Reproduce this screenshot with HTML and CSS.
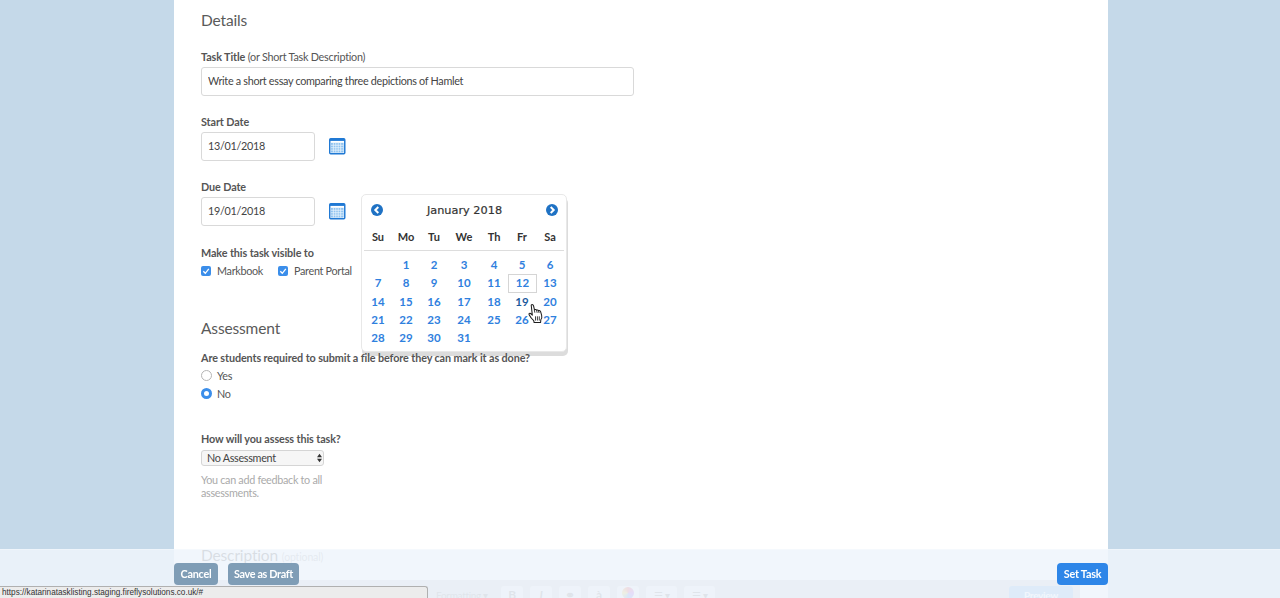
FILE: index.html
```html
<!DOCTYPE html>
<html lang="en">
<head>
<meta charset="utf-8">
<title>Set Task</title>
<link rel="stylesheet" href="styles.css">
</head>
<body>
<main class="panel">
  <h2 class="heading details-heading">Details</h2>

  <div class="field title-field">
    <label class="label">Task Title <span class="label-note">(or Short Task Description)</span></label>
    <input class="input input-wide" type="text" value="Write a short essay comparing three depictions of Hamlet">
  </div>

  <div class="field date-field">
    <label class="label">Start Date</label>
    <div class="date-row">
      <input class="input input-date" type="text" value="13/01/2018">
      <svg class="cal-icon" viewBox="0 0 17 17"><rect x="0.75" y="0.75" width="15.5" height="15.5" rx="1" fill="#fff" stroke="#2079d4" stroke-width="1.5"/><rect x="1" y="1" width="15" height="2" fill="#2079d4"/><rect x="2" y="5" width="13" height="10" fill="#8fc3f0"/><path d="M4.500 5v10M7 5v10M9.500 5v10M12 5v10M2 7.500h13M2 10h13M2 12.500h13" stroke="#e6f2fc" stroke-width=".8"/></svg>
    </div>
  </div>

  <div class="field date-field">
    <label class="label">Due Date</label>
    <div class="date-row">
      <input class="input input-date" type="text" value="19/01/2018">
      <svg class="cal-icon" viewBox="0 0 17 17"><rect x="0.75" y="0.75" width="15.5" height="15.5" rx="1" fill="#fff" stroke="#2079d4" stroke-width="1.5"/><rect x="1" y="1" width="15" height="2" fill="#2079d4"/><rect x="2" y="5" width="13" height="10" fill="#8fc3f0"/><path d="M4.500 5v10M7 5v10M9.500 5v10M12 5v10M2 7.500h13M2 10h13M2 12.500h13" stroke="#e6f2fc" stroke-width=".8"/></svg>
    </div>
    <div class="calendar">
      <div class="cal-head">
        <svg class="cal-nav" viewBox="0 0 12 12"><circle cx="6" cy="6" r="6" fill="#1f72c4"/><path d="M7.300 3 4.300 6l3 3" fill="none" stroke="#fff" stroke-width="2"/></svg>
        <span class="cal-title">January 2018</span>
        <svg class="cal-nav" viewBox="0 0 12 12"><circle cx="6" cy="6" r="6" fill="#1f72c4"/><path d="M4.700 3l3 3-3 3" fill="none" stroke="#fff" stroke-width="2"/></svg>
      </div>
      <div class="cal-grid cal-weekdays">
        <span>Su</span><span>Mo</span><span>Tu</span><span>We</span><span>Th</span><span>Fr</span><span>Sa</span>
      </div>
      <div class="cal-grid cal-days">
        <span></span><span>1</span><span>2</span><span>3</span><span>4</span><span>5</span><span>6</span>
        <span>7</span><span>8</span><span>9</span><span>10</span><span>11</span><span class="today">12</span><span>13</span>
        <span>14</span><span>15</span><span>16</span><span>17</span><span>18</span><span class="hover">19</span><span>20</span>
        <span>21</span><span>22</span><span>23</span><span>24</span><span>25</span><span>26</span><span>27</span>
        <span>28</span><span>29</span><span>30</span><span>31</span>
      </div>
      <svg class="cursor" viewBox="0 0 17 21"><path d="M3.400 1.500c.9-.9 2.200-.4 2.500.8l1 4.300c.7-.7 1.800-.5 2.200.4.800-.6 1.800-.3 2.100.6.800-.4 1.900-.1 2.200.9l1.100 3.900c.5 1.900.1 3.500-.9 4.700l-.2 3H6.500l-.4-2C4.200 16.400 2.400 14.100 1.200 11.800c-.6-1.100.7-2.100 1.600-1.300l1.800 1.700z" fill="#fff" stroke="#1c1c1c" stroke-width="1.100" stroke-linejoin="round"/><path d="M8 13.500V18M10 13.500V18M12 13.500V18M6.700 6.700l.6 3M9.100 7l.6 2.800M11.200 7.600l.6 2.400" fill="none" stroke="#1c1c1c" stroke-width=".9"/></svg>
    </div>
  </div>

  <div class="field visible-field">
    <label class="label">Make this task visible to</label>
    <div class="check-row">
      <span class="option"><svg class="check" viewBox="0 0 10 10"><rect width="10" height="10" rx="2" fill="#3b8eea"/><path d="M2.300 5.200 4.300 7.300 7.800 2.800" fill="none" stroke="#fff" stroke-width="1.300"/></svg>Markbook</span>
      <span class="option"><svg class="check" viewBox="0 0 10 10"><rect width="10" height="10" rx="2" fill="#3b8eea"/><path d="M2.300 5.200 4.300 7.300 7.800 2.800" fill="none" stroke="#fff" stroke-width="1.300"/></svg>Parent Portal</span>
    </div>
  </div>

  <h2 class="heading assessment-heading">Assessment</h2>

  <div class="field submit-field">
    <label class="label">Are students required to submit a file before they can mark it as done?</label>
    <div class="radio-row"><span class="radio"></span>Yes</div>
    <div class="radio-row"><span class="radio radio-on"></span>No</div>
  </div>

  <div class="field assess-field">
    <label class="label">How will you assess this task?</label>
    <div class="select">No Assessment
      <svg class="select-arrows" viewBox="0 0 6 10"><path d="M3 0 6 4H0zM3 10 0 6h6z" fill="#333"/></svg>
    </div>
    <p class="help">You can add feedback to all assessments.</p>
  </div>

  <h2 class="heading description-heading">Description <span class="optional">(optional)</span></h2>

  <div class="toolbar">
    <span class="tool tool-format">Formatting ▾</span>
    <span class="tool tool-b">B</span>
    <span class="tool tool-b tool-i">I</span>
    <span class="tool tool-b">⚭</span>
    <span class="tool tool-b">à</span>
    <span class="tool tool-b"><span class="swatch"></span></span>
    <span class="tool tool-list">☰ ▾</span>
    <span class="tool tool-list">☰ ▾</span>
    <span class="tool tool-preview">Preview</span>
  </div>
</main>

<footer class="action-bar">
  <div class="action-inner">
    <button class="btn btn-muted btn-cancel">Cancel</button>
    <button class="btn btn-muted btn-draft">Save as Draft</button>
    <button class="btn btn-primary">Set Task</button>
  </div>
</footer>

<div class="status-bar">https://katarinatasklisting.staging.fireflysolutions.co.uk/#</div>
</body>
</html>
```
FILE: styles.css
```css
* { box-sizing: border-box; }
html, body { height: 598px; overflow: hidden; }
body {
  margin: 0;
  background: #c5d9e9;
  font-family: "Lato", "Noto Sans", sans-serif;
  font-size: 10.8px;
  letter-spacing: -0.3px;
  color: #555;
}
.panel {
  position: relative;
  width: 934px;
  height: 598px;
  margin-left: 174px;
  padding: 10px 0 0 27px;
  background: #fff;
  overflow: hidden;
}
.heading {
  margin: 0;
  font-size: 15.5px;
  line-height: 20px;
  font-weight: 400;
  letter-spacing: -0.15px;
  color: #5a5a5a;
}
.label {
  display: block;
  font-weight: 700;
  font-size: 10.8px;
  line-height: 14px;
  letter-spacing: -0.1px;
  color: #555;
}
.label-note { font-weight: 400; letter-spacing: -0.25px; }
.field { position: relative; }
.title-field { margin-top: 20px; }
.input {
  display: block;
  height: 29px;
  padding: 0 6px 2px;
  border: 1px solid #d9d9d9;
  border-radius: 3px;
  background: #fff;
  font-family: inherit;
  font-size: 10.8px;
  letter-spacing: -0.3px;
  color: #444;
  outline: none;
}
.input-wide { width: 433px; margin-top: 3px; }
.date-field { margin-top: 19px; }
.date-row { display: flex; align-items: center; gap: 14px; margin-top: 3px; }
.input-date { width: 114px; }
.cal-icon { width: 16.5px; height: 16.5px; }

.calendar {
  position: absolute;
  left: 160px;
  top: 14px;
  width: 206px;
  height: 158px;
  padding: 7px 2px 0;
  background: #fff;
  border: 1px solid #e8e8e8;
  border-radius: 5px;
  box-shadow: 1px 4px 0 #dcdcdc;
  z-index: 2;
  letter-spacing: 0;
}
.cal-head {
  display: flex;
  align-items: center;
  justify-content: space-between;
  padding: 0 6px 0 7px;
  height: 16px;
}
.cal-nav { width: 12px; height: 12px; }
.cal-title {
  font-family: "DejaVu Sans", sans-serif;
  font-size: 11.3px;
  -webkit-text-stroke: 0.2px #333;
  color: #333;
}
.cal-grid {
  display: grid;
  grid-template-columns: 28px 28px 28px 32px 28px 28px 28px;
  text-align: center;
}
.cal-weekdays {
  margin-top: 10px;
  height: 23px;
  padding: 2px 0 7px;
  line-height: 13px;
  border-bottom: 1px solid #ddd;
  color: #333;
  font-weight: 700;
  font-size: 11px;
}
.cal-days {
  margin-top: 5px;
  grid-auto-rows: 18.25px;
  line-height: 18.25px;
  font-weight: 700;
  font-size: 11.5px;
  color: #2f80de;
}
.today {
  border: 1px solid #d5d5d5;
  line-height: 16.25px;
  width: 29px;
}
.hover { color: #1d5a9e; }
.cursor {
  position: absolute;
  left: 166px;
  top: 108px;
  width: 16px;
  height: 21px;
}

.visible-field { margin-top: 20px; }
.check-row { display: flex; gap: 15px; margin-top: 2px; }
.option { display: inline-flex; align-items: center; gap: 6px; line-height: 18px; }
.check { width: 10px; height: 10px; }

.assessment-heading { margin-top: 38px; }
.submit-field { margin-top: 13px; }
.radio-row { display: flex; align-items: center; gap: 6px; line-height: 17.5px; height: 17.5px; }
.submit-field .label { position: relative; z-index: 3; margin-bottom: 2px; }
.radio {
  width: 11px;
  height: 11px;
  margin-left: -0.5px;
  margin-right: -0.5px;
  border-radius: 50%;
  border: 1px solid #b5b5b5;
  background: #fff;
}
.radio-on { border: 3.500px solid #3b8eea; }

.assess-field { margin-top: 30px; }
.select {
  position: relative;
  width: 123px;
  height: 16px;
  margin-top: 4px;
  padding-left: 5px;
  line-height: 14px;
  border: 1px solid #d5d5d5;
  border-radius: 3px;
  background: #f6f6f6;
  color: #444;
}
.select-arrows {
  position: absolute;
  right: 1px;
  top: 2px;
  width: 5px;
  height: 10px;
}
.help {
  width: 130px;
  margin: 7px 0 0;
  line-height: 13px;
  color: #aaa;
}
.description-heading { margin-top: 46px; }
.optional { font-size: 10.5px; color: #aaa; }
.toolbar {
  position: absolute;
  left: 0;
  top: 580px;
  width: 906px;
  height: 18px;
  display: flex;
  gap: 7px;
  padding: 6px 0 0 260px;
  background: #cfd2d4;
}
.tool {
  height: 20px;
  background: #e9ebed;
  border-radius: 3px;
  color: #888;
  font-size: 10px;
  line-height: 18px;
  text-align: center;
}
.tool-format { width: 56px; background: transparent; margin-right: 4px; }
.tool-b { width: 22px; font-weight: 700; font-size: 12px; }
.tool-i { font-style: italic; }
.tool-list { width: 31px; }
.swatch {
  display: inline-block;
  width: 12px;
  height: 12px;
  border-radius: 50%;
  background: conic-gradient(#e85a5a, #b05ae8, #5a9ae8, #e8d25a, #e85a5a);
}
.tool-preview {
  position: absolute;
  left: 835px;
  top: 6px;
  width: 64px;
  background: #7fb6e8;
  color: #fff;
  font-weight: 700;
}

.action-bar {
  position: fixed;
  left: 0;
  right: 0;
  bottom: 0;
  height: 49px;
  background: rgba(238, 245, 251, .85);
  border-top: 1px solid rgba(255,255,255,.3);
}
.action-inner {
  display: flex;
  gap: 10px;
  width: 934px;
  margin: 13px 0 0 174px;
}
.btn {
  height: 22px;
  padding: 0 0 2px;
  border: 0;
  border-radius: 4px;
  font-family: inherit;
  font-size: 10.8px;
  letter-spacing: -0.2px;
  font-weight: 700;
  color: #fff;
}
.btn-muted { background: #7f9db6; }
.btn-cancel { width: 44px; }
.btn-draft { width: 71px; letter-spacing: -0.35px; }
.btn-primary { margin-left: auto; width: 51px; background: #2e86e8; }

.status-bar {
  position: fixed;
  left: 0;
  bottom: 0;
  width: 428px;
  height: 12px;
  padding-left: 2px;
  background: #ececec;
  border: 1px solid #b0b0b0;
  border-left: 0;
  border-bottom: 0;
  border-radius: 0 3px 0 0;
  font-family: "Liberation Sans", sans-serif;
  font-size: 8.2px;
  letter-spacing: 0;
  line-height: 11px;
  color: #333;
}
```
